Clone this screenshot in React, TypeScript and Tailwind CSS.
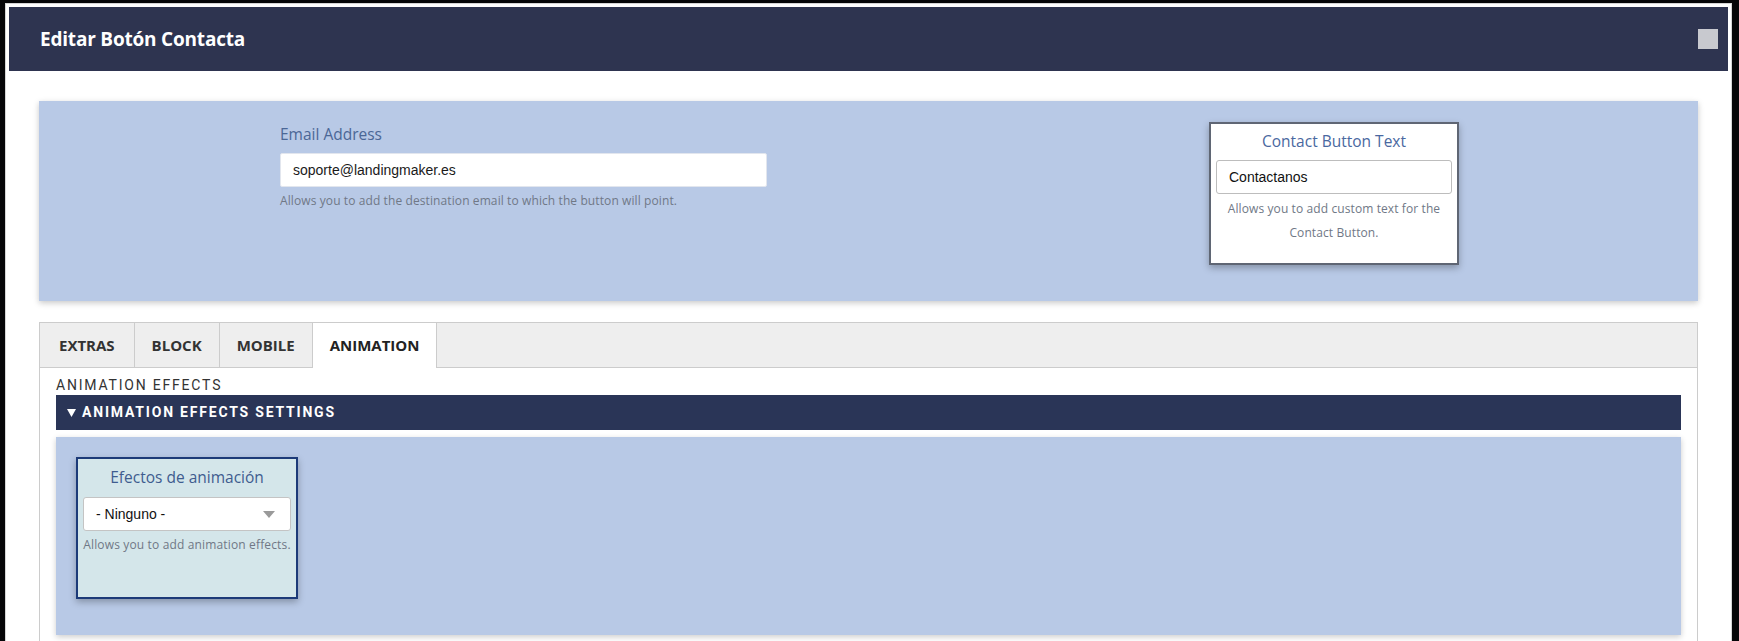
export default function App() {
  return (
    <div className="h-[641px] overflow-hidden bg-[#060608] pt-[3px] pl-[5px] pr-[7px] font-['Open_Sans',sans-serif]">
      <div className="h-[700px] bg-white border border-[#d6d6d6] p-[3px]">
        {/* Header */}
        <div className="h-[64px] bg-[#2e3450] flex items-center justify-between pl-[31px] pr-[10px]">
          <h1 className="text-white font-bold text-[19px] leading-none tracking-[-0.2px]">Editar Botón Contacta</h1>
          <div className="w-[20px] h-[20px] bg-[#c8c9cf]" />
        </div>

        {/* Body */}
        <div className="px-[30px] pt-[30px]">
          {/* Top panel */}
          <div className="h-[200px] bg-[#b8c9e6] shadow-[0_2px_6px_rgba(0,0,0,0.22)] pt-[21px] flex items-start">
            <div className="ml-[241px] w-[487px]">
              <div className="text-[15.5px] leading-[24px] text-[#4b6796]">Email Address</div>
              <div className="mt-[7px] h-[34px] bg-white border border-[#e2e6ee] rounded-[2px] flex items-center pl-[12px] font-['Liberation_Sans',Arial,sans-serif] text-[14px] text-[#1a1a1a]">
                soporte@landingmaker.es
              </div>
              <div className="mt-[5px] text-[12px] leading-[18px] text-[#707886] tracking-[0.1px]">
                Allows you to add the destination email to which the button will point.
              </div>
            </div>
            <div className="ml-[442px] w-[250px] h-[143px] bg-white border-2 border-[#5f6674] shadow-[0_3px_7px_rgba(0,0,0,0.28)] px-[5px] pt-[5px] text-center">
              <div className="text-[15.5px] leading-[24px] text-[#4a68a0]">Contact Button Text</div>
              <div className="mt-[7px] h-[34px] bg-white border border-[#bdbdbd] rounded-[3px] flex items-center pl-[12px] text-left font-['Liberation_Sans',Arial,sans-serif] text-[14px] text-[#111]">
                Contactanos
              </div>
              <div className="mt-[3px] px-[5px] text-[12px] leading-[24px] text-[#707886] tracking-[0.1px]">
                Allows you to add custom text for the Contact Button.
              </div>
            </div>
          </div>

          {/* Tabs */}
          <div className="mt-[21px] border border-[#cccccc]">
            <div className="flex h-[45px] bg-[#eeeeee] border-b border-[#cccccc]">
              <div className="flex items-center px-[19px] border-r border-[#cccccc] text-[15px] font-bold text-[#333]">EXTRAS</div>
              <div className="flex items-center px-[17px] border-r border-[#cccccc] text-[15px] font-bold text-[#333]">BLOCK</div>
              <div className="flex items-center px-[17px] border-r border-[#cccccc] text-[15px] font-bold text-[#333]">MOBILE</div>
              <div className="relative flex items-center h-[45px] px-[17px] bg-white border-r border-[#cccccc] text-[15px] font-bold text-[#222]">ANIMATION</div>
            </div>

            <div className="px-[16px] pt-[7px] pb-[20px]">
              <div className="font-['Roboto',sans-serif] text-[14px] leading-[20px] tracking-[1.8px] text-[#333]">ANIMATION EFFECTS</div>
              <div className="h-[35px] bg-[#2a3557] flex items-center pl-[11px]">
                <svg width="9" height="8" viewBox="0 0 9 8" className="block">
                  <path d="M0 0 H9 L4.5 8 Z" fill="#ffffff" />
                </svg>
                <span className="ml-[6px] font-['Roboto',sans-serif] text-white font-bold text-[14px] tracking-[1.8px]">ANIMATION EFFECTS SETTINGS</span>
              </div>
              <div className="mt-[7px] h-[198px] bg-[#b8c9e6] shadow-[0_2px_6px_rgba(0,0,0,0.2)] p-[20px]">
                <div className="w-[222px] h-[142px] bg-[#d4e6ea] border-2 border-[#1c3a78] shadow-[0_3px_7px_rgba(0,0,0,0.28)] px-[5px] pt-[6px] text-center">
                  <div className="text-[15.5px] leading-[24px] text-[#3f5c8f]">Efectos de animación</div>
                  <div className="mt-[8px] h-[34px] bg-white border border-[#c4c4c4] rounded-[3px] flex items-center justify-between pl-[12px] pr-[15px] font-['Liberation_Sans',Arial,sans-serif] text-[14px] text-[#111]">
                    <span>- Ninguno -</span>
                    <svg width="12" height="7" viewBox="0 0 12 7" className="block">
                      <path d="M0 0 H12 L6 7 Z" fill="#9a9a9a" />
                    </svg>
                  </div>
                  <div className="mt-[5px] text-[12px] leading-[18px] text-[#707886] whitespace-nowrap tracking-[0.15px]">
                    Allows you to add animation effects.
                  </div>
                </div>
              </div>
            </div>
          </div>
        </div>
      </div>
    </div>
  );
}
